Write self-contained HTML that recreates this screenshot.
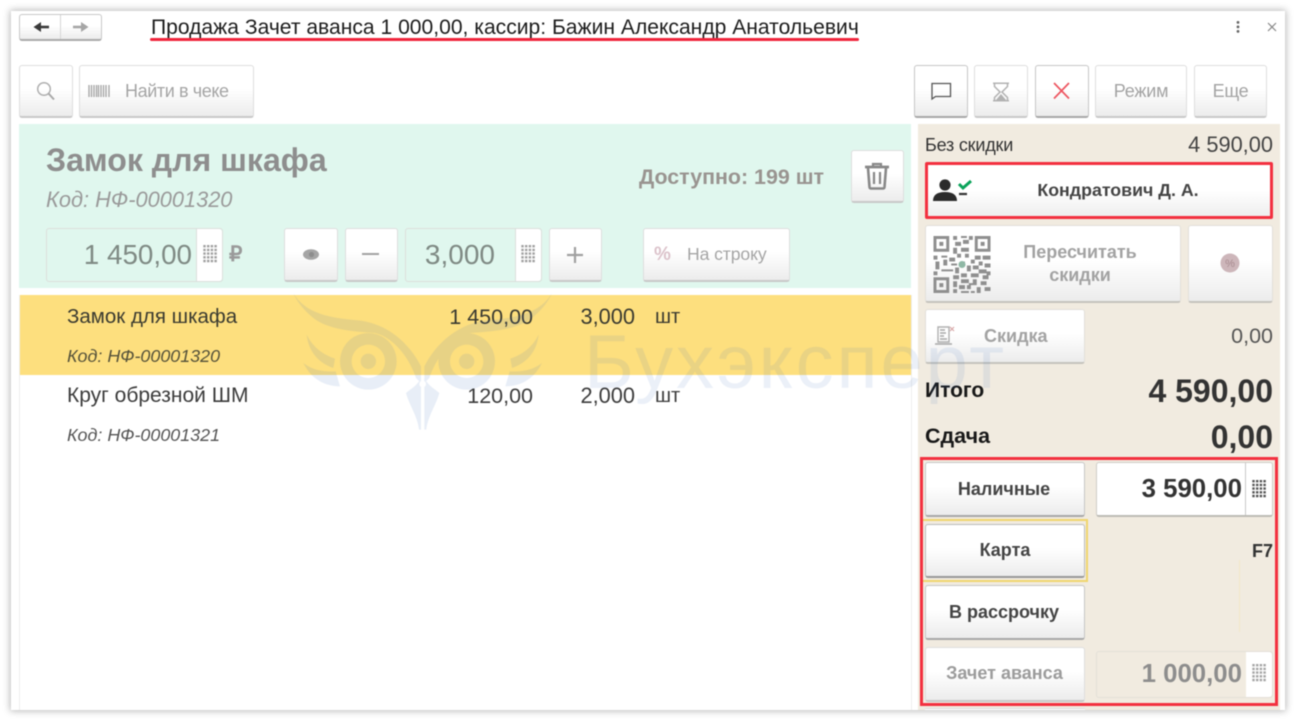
<!DOCTYPE html>
<html lang="ru"><head><meta charset="utf-8"><title>Продажа</title>
<style>
html,body{margin:0;padding:0;width:1296px;height:721px;overflow:hidden;background:#fff}
body{font-family:"Liberation Sans","Noto Sans CJK JP",sans-serif;position:relative;color:#333}
#root{position:absolute;left:0;top:0;width:1296px;height:721px;overflow:hidden;filter:blur(.4px)}
#win{position:absolute;left:11px;top:11px;width:1274px;height:699px;background:#fff;box-shadow:0 0 7px 1px rgba(0,0,0,.28)}
.a{position:absolute;box-sizing:border-box}
.t{position:absolute;white-space:nowrap;line-height:30px;height:30px}
.c{text-align:center}
.btn{position:absolute;box-sizing:border-box;background:linear-gradient(#fff 0,#fff 45%,#ececec 100%);border:1px solid #dedede;border-bottom:2px solid #c8c8c8;border-radius:3px;text-align:center;white-space:nowrap}
.dk{border-color:#c6c6c6;border-bottom:2px solid #a8a8a8}
.f{position:absolute;box-sizing:border-box;border:1px solid #dcdfdc;border-radius:3px}
svg{position:absolute;overflow:visible}
</style></head><body>
<div id="root">
<div id="win"></div>

<!-- nav -->
<div class="btn dk" style="left:19px;top:14px;width:83px;height:27px;border-color:#c8c8c8;border-bottom-color:#aaa"></div>
<div class="a" style="left:60px;top:15px;width:1px;height:24px;background:#d6d6d6"></div>
<svg style="left:32px;top:20px" width="18" height="14"><path d="M17 7H7" stroke="#3a3a3a" stroke-width="2.6"/><path d="M9 2L1.5 7 9 12z" fill="#3a3a3a"/></svg>
<svg style="left:72px;top:20px" width="18" height="14"><path d="M1 7h10" stroke="#a6a6a6" stroke-width="2.6"/><path d="M9 2l7.5 5L9 12z" fill="#a6a6a6"/></svg>
<div class="t" style="left:151px;top:13px;font-size:21.08px;color:#1c1c1c">Продажа Зачет аванса 1 000,00, кассир: Бажин Александр Анатольевич</div>
<div class="a" style="left:150px;top:38px;width:709px;height:2.5px;background:#f0243c;border-radius:2px"></div>
<svg style="left:1234px;top:20px" width="8" height="14"><g fill="#666"><circle cx="4" cy="2.4" r="1.4"/><circle cx="4" cy="6.9" r="1.4"/><circle cx="4" cy="11.4" r="1.4"/></g></svg>
<svg style="left:1267px;top:22px" width="10" height="10"><path d="M1 1l8 8M9 1l-8 8" stroke="#888" stroke-width="1.2"/></svg>

<!-- top buttons -->
<div class="btn" style="left:19px;top:65px;width:54px;height:53px"></div>
<svg style="left:36px;top:81px" width="20" height="20"><circle cx="8" cy="8" r="6.3" fill="none" stroke="#b0b0b0" stroke-width="1.5"/><path d="M12.5 12.5l5.5 6" stroke="#a9a9a9" stroke-width="2"/></svg>
<div class="btn" style="left:79px;top:65px;width:175px;height:53px"></div>
<svg style="left:88px;top:84px" width="23" height="14"><path d="M1 1v12M3.5 1v12M6 1v12M8.5 1v12M10.5 1v12M13 1v12M15.5 1v12M18 1v12M21 1v12" stroke="#a3a3a3" stroke-width="1.3"/></svg>
<div class="t" style="left:125px;top:76px;font-size:18px;color:#a5a5a5;letter-spacing:-.4px">Найти в чеке</div>

<div class="btn dk" style="left:914px;top:65px;width:54px;height:53px"></div>
<svg style="left:930px;top:82px" width="22" height="18"><path d="M2 1.5h18.5v13H5.5L2 17z" fill="none" stroke="#555" stroke-width="1.3"/></svg>
<div class="btn" style="left:974px;top:65px;width:54px;height:53px"></div>
<svg style="left:991px;top:82px" width="20" height="20"><path d="M2 1.2h16M2 18.8h16M3.5 1v3.5l5.5 5.5-5.5 5.5V19M16.5 1v3.5L11 10l5.5 5.5V19" fill="none" stroke="#b2b2b2" stroke-width="1.5"/><path d="M5 18l5-6 5 6z" fill="#b2b2b2"/></svg>
<div class="btn dk" style="left:1035px;top:65px;width:54px;height:53px"></div>
<svg style="left:1052px;top:82px" width="20" height="18"><path d="M2 1l15 15.5M17 1L2 16.5" stroke="#ee5560" stroke-width="1.7"/></svg>
<div class="btn" style="left:1095px;top:65px;width:92px;height:53px;line-height:50px;font-size:18px;color:#a3a3a3;letter-spacing:-.2px">Режим</div>
<div class="btn" style="left:1194px;top:65px;width:73px;height:53px;line-height:50px;font-size:18px;color:#a3a3a3;letter-spacing:-.3px">Еще</div>

<!-- green panel -->
<div class="a" style="left:19px;top:124px;width:892px;height:164px;background:#e0f7ee"></div>
<div class="t" style="left:46px;top:145px;font-size:32.1px;font-weight:bold;color:#8e8e8e">Замок для шкафа</div>
<div class="t" style="left:46px;top:185px;font-size:21.8px;font-style:italic;color:#9a9a9a">Код: НФ-00001320</div>
<div class="t" style="right:472px;top:162px;font-size:21.4px;font-weight:bold;color:#999490">Доступно: 199 шт</div>
<div class="btn" style="left:851px;top:150px;width:53px;height:53px"></div>
<svg style="left:864px;top:162px" width="26" height="28"><path d="M1 5h24" stroke="#888" stroke-width="2.8"/><path d="M9 5V2h8v3" fill="none" stroke="#888" stroke-width="2.2"/><path d="M4 6l1.5 19q.2 1.5 1.7 1.5h11.6q1.5 0 1.7-1.5L22 6" fill="none" stroke="#888" stroke-width="2.6"/><path d="M10 10v12M16 10v12" stroke="#888" stroke-width="2.2"/></svg>

<!-- price -->
<div class="f" style="left:46px;top:228px;width:177px;height:54px"></div>
<div class="a" style="left:196px;top:229px;width:26px;height:52px;background:#fff;border-left:1px solid #dcdfdc;border-radius:0 3px 3px 0"></div>
<div class="t" style="right:1104px;top:240px;font-size:27.8px;color:#7f8a84">1 450,00</div>
<svg style="left:203px;top:245px" width="15" height="19"><path d="M1.5 0v18.5M5.2 0v18.5M8.9 0v18.5M12.6 0v18.5" stroke="#a0a0a0" stroke-width="2.4" stroke-dasharray="2.4 1.3"/></svg>
<div class="t" style="left:229px;top:240px;font-size:21px;font-weight:bold;color:#9a9a9a">₽</div>
<div class="btn" style="left:284px;top:228px;width:54px;height:54px"></div>
<svg style="left:303px;top:249px" width="16" height="11"><ellipse cx="8" cy="5.5" rx="8" ry="5.3" fill="#a5a5a5"/><circle cx="8.5" cy="5.5" r="2.6" fill="#8d8d8d"/></svg>
<div class="btn" style="left:345px;top:228px;width:53px;height:54px"></div>
<div class="a" style="left:362px;top:253px;width:17px;height:2px;background:#a2a2a2"></div>
<div class="f" style="left:405px;top:228px;width:137px;height:54px"></div>
<div class="a" style="left:515px;top:229px;width:26px;height:52px;background:#fff;border-left:1px solid #dcdfdc;border-radius:0 3px 3px 0"></div>
<div class="t" style="right:801px;top:240px;font-size:28px;color:#7f8a84">3,000</div>
<svg style="left:521px;top:245px" width="15" height="19"><path d="M1.5 0v18.5M5.2 0v18.5M8.9 0v18.5M12.6 0v18.5" stroke="#a0a0a0" stroke-width="2.4" stroke-dasharray="2.4 1.3"/></svg>
<div class="btn" style="left:549px;top:228px;width:53px;height:54px"></div>
<svg style="left:566px;top:246px" width="18" height="18"><path d="M1 9h16M9 1v16" stroke="#a0a0a0" stroke-width="2.2"/></svg>
<div class="btn" style="left:643px;top:228px;width:147px;height:54px"></div>
<div class="t" style="left:654px;top:240px;font-size:19px;font-weight:bold;color:#dcc3cb">%</div>
<div class="t" style="left:687px;top:239px;font-size:17.6px;color:#a5a5a5;letter-spacing:-.1px">На строку</div>

<!-- table -->
<div class="a" style="left:19px;top:295px;width:1px;height:415px;background:#eee"></div>
<div class="a" style="left:911px;top:295px;width:1px;height:415px;background:#eee"></div>
<div class="a" style="left:20px;top:295px;width:891px;height:80px;background:#fddf7e"></div>
<div class="t" style="left:67px;top:302px;font-size:20.5px;color:#3a3a30">Замок для шкафа</div>
<div class="t" style="left:67px;top:341px;font-size:17.9px;font-style:italic;color:#55523a">Код: НФ-00001320</div>
<div class="t" style="right:763px;top:302px;font-size:21.5px;color:#3a3a30">1 450,00</div>
<div class="t" style="right:661px;top:302px;font-size:21.8px;color:#3a3a30">3,000</div>
<div class="t" style="left:655px;top:302px;font-size:20px;color:#3a3a30">шт</div>
<div class="t" style="left:67px;top:381px;font-size:21px;color:#3c3c3c">Круг обрезной ШМ</div>
<div class="t" style="left:67px;top:420px;font-size:17.9px;font-style:italic;color:#555">Код: НФ-00001321</div>
<div class="t" style="right:763px;top:381px;font-size:21.5px;color:#3c3c3c">120,00</div>
<div class="t" style="right:661px;top:381px;font-size:21.8px;color:#3c3c3c">2,000</div>
<div class="t" style="left:655px;top:381px;font-size:20px;color:#3c3c3c">шт</div>

<!-- right panel -->
<div class="a" style="left:918px;top:124px;width:362px;height:586px;background:#f1ebe0"></div>
<div class="t" style="left:925px;top:130px;font-size:18px;color:#333;letter-spacing:-.2px">Без скидки</div>
<div class="t" style="right:23px;top:130px;font-size:21.8px;color:#444">4 590,00</div>
<div class="btn" style="left:925px;top:162px;width:348px;height:57px;border:3px solid #f3303f;border-radius:2px;background:linear-gradient(#fff 50%,#eee 100%);line-height:50px;font-size:17.8px;font-weight:bold;color:#444"><span style="position:relative;left:19px">Кондратович Д. А.</span></div>
<svg style="left:933px;top:178px" width="40" height="24"><circle cx="12" cy="7" r="5.6" fill="#2b2b2b"/><path d="M0 23c0-6 4-9 12-9s12 3 12 9z" fill="#2b2b2b"/><path d="M26 6l4 4 8-7" fill="none" stroke="#0aa35a" stroke-width="3"/><path d="M26 16h8" stroke="#333" stroke-width="2.2"/></svg>

<div class="btn" style="left:925px;top:225px;width:256px;height:78px;border-color:#e2e0da;border-bottom-color:#c5c3bd"></div>
<div class="a c" style="left:1000px;top:241px;width:160px;font-size:18px;font-weight:bold;color:#a3a3a3;line-height:22.5px">Пересчитать<br>скидки</div>
<svg style="left:933px;top:236px" width="58" height="57" viewBox="0 0 29 29"><g fill="#8f8f8f"><path d="M0 0h8v8H0zM1.5 1.5v5h5v-5zM21 0h8v8h-8zM22.5 1.5v5h5v-5zM0 21h8v8H0zM1.5 22.5v5h5v-5z" fill-rule="evenodd"/><path d="M3 3h2v2H3zM24 3h2v2h-2zM3 24h2v2H3z"/><path d="M10 0h2v2h-2zM14 0h3v1h-3zM18 0h2v2h-2zM11 3h3v2h-3zM15 2h3v2h-3zM10 6h2v3h-2zM14 6h4v2h-4zM16 9h2v2h-2zM12 9h2v2h-2zM0 10h2v2H0zM4 10h3v1H4zM8 11h3v2H8zM21 10h3v2h-3zM25 10h4v2h-4zM1 13h2v4H1zM5 12h2v3H5zM9 14h3v1H9zM14 13h2v2h-2zM19 12h2v2h-2zM23 13h2v2h-2zM26 14h3v2h-3zM4 17h6v1H4zM11 16h2v3h-2zM20 15h3v2h-3zM25 17h2v2h-2zM17 15h2v3h-2zM0 18h2v2H0zM10 20h3v2h-3zM14 19h3v2h-3zM19 19h4v2h-4zM25 20h3v2h-3zM10 23h2v3h-2zM14 22h4v2h-4zM20 22h2v3h-2zM24 23h3v2h-3zM13 25h3v2h-3zM17 25h2v2h-2zM10 27h2v2h-2zM22 26h2v3h-2zM26 26h3v2h-3zM14 28h4v1h-4zM19 28h2v1h-2zM23 17h2v2h-2zM27 18h2v2h-2zM18 24h2v1h-2z"/></g><circle cx="14.5" cy="14.5" r="1.8" fill="#8fb8a5"/></svg>
<div class="btn" style="left:1188px;top:225px;width:85px;height:78px;border-color:#e2e0da;border-bottom-color:#c5c3bd"></div>
<svg style="left:1220px;top:253px" width="20" height="20"><circle cx="10" cy="10" r="9.5" fill="#cdb6ba"/><text x="10" y="14" font-size="11" fill="#a88b90" text-anchor="middle" font-family="Liberation Sans">%</text></svg>

<div class="btn" style="left:925px;top:309px;width:160px;height:55px;border-color:#e2e0da;border-bottom-color:#c5c3bd"></div>
<svg style="left:935px;top:326px" width="20" height="21"><path d="M3 1h11v15H3z" fill="none" stroke="#b0b0b0" stroke-width="1.4"/><path d="M5 4h5M5 7h6M5 10h4M5 13h7M0 18h17" stroke="#a8a8a8" stroke-width="1.6"/><path d="M15 1l4 4M19 1l-4 4" stroke="#d9a8a8" stroke-width="1.2"/></svg>
<div class="t" style="left:984px;top:321px;font-size:18px;font-weight:bold;color:#a3a3a3">Скидка</div>
<div class="t" style="right:23px;top:321px;font-size:21.5px;color:#555">0,00</div>

<div class="t" style="left:925px;top:376px;font-size:21px;font-weight:bold;color:#181818">Итого</div>
<div class="t" style="right:23px;top:376px;font-size:32px;font-weight:bold;color:#333">4 590,00</div>
<div class="t" style="left:925px;top:421px;font-size:21.5px;font-weight:bold;color:#181818">Сдача</div>
<div class="t" style="right:23px;top:422px;font-size:32px;font-weight:bold;color:#333">0,00</div>

<!-- payments -->
<div class="btn dk" style="left:925px;top:462px;width:160px;height:55px;line-height:52px;font-size:18px;font-weight:bold;color:#444;text-indent:-2px">Наличные</div>
<div class="a" style="left:1096px;top:462px;width:177px;height:55px;background:#fff;border:1px solid #cfcdc7;border-bottom:2px solid #bdbbb5;border-radius:3px"></div>
<div class="a" style="left:1245px;top:463px;width:1px;height:52px;background:#c9c9c9"></div>
<div class="t" style="right:54px;top:474px;font-size:25.8px;font-weight:bold;color:#333">3 590,00</div>
<svg style="left:1252px;top:480px" width="15" height="19"><path d="M1.5 0v18.5M5.2 0v18.5M8.9 0v18.5M12.6 0v18.5" stroke="#555" stroke-width="2.4" stroke-dasharray="2.4 1.3"/></svg>

<div class="a" style="left:921px;top:519px;width:167px;height:63px;border:2px solid #f0d66e"></div>
<div class="btn dk" style="left:925px;top:524px;width:160px;height:54px;line-height:51px;font-size:18px;font-weight:bold;color:#444;border-color:#bbb;border-bottom-color:#999">Карта</div>
<div class="t" style="right:23px;top:536px;font-size:18px;font-weight:bold;color:#333">F7</div>
<div class="a" style="left:1239px;top:560px;width:1px;height:72px;background:#f2e8c8"></div>
<div class="btn dk" style="left:925px;top:585px;width:160px;height:55px;line-height:52px;font-size:18px;font-weight:bold;color:#444;text-indent:-2px">В рассрочку</div>
<div class="btn" style="left:925px;top:647px;width:160px;height:55px;line-height:50px;font-size:18px;font-weight:bold;color:#9c9c9c;text-indent:-1px">Зачет аванса</div>
<div class="f" style="left:1096px;top:651px;width:177px;height:47px;border-color:#e3e0d8"></div>
<div class="a" style="left:1246px;top:652px;width:26px;height:45px;background:#fff;border-radius:0 3px 3px 0"></div>
<div class="t" style="right:54px;top:659px;font-size:25.8px;font-weight:bold;color:#8d8d8d">1 000,00</div>
<svg style="left:1252px;top:664px" width="15" height="19"><path d="M1.5 0v18.5M5.2 0v18.5M8.9 0v18.5M12.6 0v18.5" stroke="#a5a5a5" stroke-width="2.4" stroke-dasharray="2.4 1.3"/></svg>
<div class="a" style="left:925px;top:708px;width:160px;height:2px;background:#fff;border-top:1px solid #ddd"></div>
<div class="a" style="left:920px;top:457px;width:358px;height:249px;border:3px solid #f3303f"></div>

<!-- watermark -->
<svg style="left:285px;top:288px" width="280" height="150" viewBox="0 0 840 450">
<g fill="rgb(60,110,190)" opacity=".11" fill-rule="evenodd">
<path d="M25 15C60 75 130 90 220 97C300 105 370 160 408 235V285L393 270C375 215 330 150 270 135C200 130 130 125 85 90C55 65 35 40 25 15Z"/>
<path d="M250 135a85 85 0 1 0 .01 0ZM250 170a50 50 0 1 1-.01 0Z"/>
<circle cx="250" cy="220" r="23"/>
<path d="M65 140C85 180 115 200 150 212L145 240C100 225 70 190 65 140Z"/>
<path d="M55 225C85 248 120 252 152 250L165 295C110 295 75 265 55 225Z"/>
<path d="M363 315C380 300 395 295 408 270V425H402C398 385 372 350 363 315Z"/>
<g transform="translate(826 0) scale(-1 1)">
<path d="M25 15C60 75 130 90 220 97C300 105 370 160 408 235V285L393 270C375 215 330 150 270 135C200 130 130 125 85 90C55 65 35 40 25 15Z"/>
<path d="M281 135a85 85 0 1 0 .01 0ZM281 170a50 50 0 1 1-.01 0Z"/>
<circle cx="281" cy="220" r="23"/>
<path d="M65 140C85 180 115 200 150 212L145 240C100 225 70 190 65 140Z"/>
<path d="M55 225C85 248 120 252 152 250L165 295C110 295 75 265 55 225Z"/>
<path d="M363 315C380 300 395 295 408 270V425H402C398 385 372 350 363 315Z"/>
</g>
</g>
<circle cx="413" cy="288" r="10" fill="#fff"/>
</svg>
<svg style="left:0;top:0" width="1296" height="721"><text x="584" y="388" font-family="Liberation Sans" font-size="76" textLength="420" lengthAdjust="spacing" fill="rgb(60,110,190)" fill-opacity=".1">Бухэксперт</text></svg>
</div>
</body></html>
